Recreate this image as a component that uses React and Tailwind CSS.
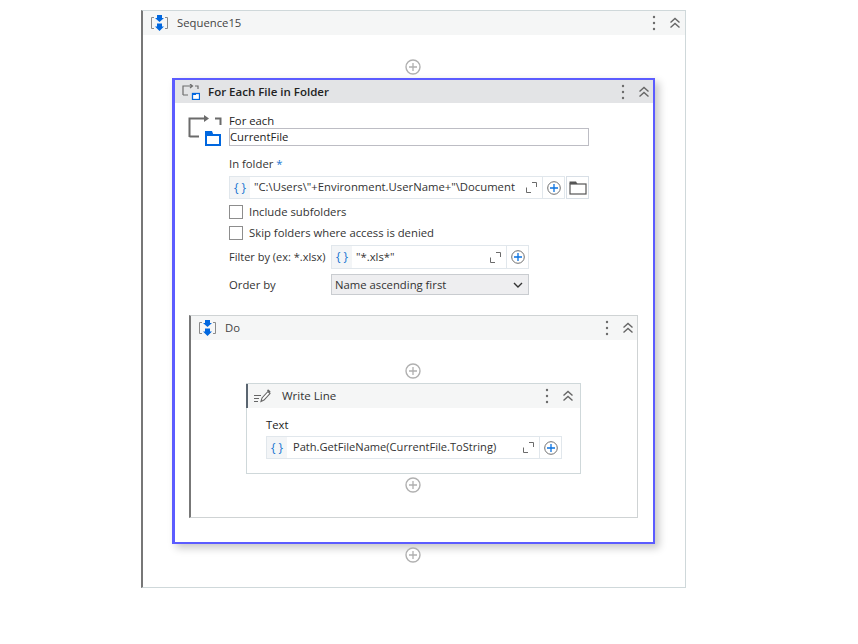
import React from "react";

const SequenceIcon = () => (
  <svg width="17" height="16" viewBox="0 0 17 16" fill="none" className="shrink-0">
    <path d="M3 2.5H0.5V13.5H3M14 2.5H16.5V13.5H14" stroke="#8a8a8a" strokeWidth="1" />
    <path d="M6 0H11V3H13L8.5 7L4 3H6Z" fill="#0067df" />
    <path d="M6 8.5H11V11.5H13L8.5 16L4 11.5H6Z" fill="#0067df" />
  </svg>
);

const ForEachSmall = () => (
  <svg width="18" height="16" viewBox="0 0 18 16" fill="none" className="shrink-0">
    <path d="M1 11V2H10M8 0L10.5 2L8 4M13 2H16V5M1 11H6" stroke="#6d6d6d" strokeWidth="1.2" />
    <rect x="10.5" y="9.5" width="7" height="6" stroke="#0067df" strokeWidth="1.3" fill="#fff" />
    <path d="M10.5 9H14V11H10.5Z" fill="#0067df" />
  </svg>
);

const ForEachLarge = () => (
  <svg width="34" height="31" viewBox="0 0 34 31" fill="none" className="shrink-0">
    <path d="M1.5 22V3.5H17" stroke="#6b6b6b" strokeWidth="2" />
    <path d="M1.5 21.5H11" stroke="#6b6b6b" strokeWidth="2" />
    <path d="M16 0L21 3.5L16 7Z" fill="#6b6b6b" />
    <path d="M27 3.5H32.5V10" stroke="#6b6b6b" strokeWidth="2" />
    <rect x="18" y="20" width="14" height="10" stroke="#0067df" strokeWidth="2" fill="#fff" />
    <path d="M17 16H24L25.5 20H17Z" fill="#0067df" />
  </svg>
);

const WriteLineIcon = () => (
  <svg width="17" height="14" viewBox="0 0 17 14" fill="none" className="shrink-0">
    <path d="M0 6.5H7M0 9.5H5M0 12.5H4" stroke="#666" strokeWidth="1" />
    <path d="M7 12.5L8 9L14 2.5L16 4.5L10 11Z" stroke="#666" strokeWidth="1.1" fill="#fff" />
    <path d="M13 1L14.5 0.5L16.5 2.5L16 4L13.5 2Z" fill="#666" />
  </svg>
);

const Dots = () => (
  <svg width="4" height="16" viewBox="0 0 4 16" className="shrink-0">
    <circle cx="2" cy="2" r="1.2" fill="#6b6b6b" />
    <circle cx="2" cy="8" r="1.2" fill="#6b6b6b" />
    <circle cx="2" cy="14" r="1.2" fill="#6b6b6b" />
  </svg>
);

const Collapse = () => (
  <svg width="12" height="12" viewBox="0 0 12 12" fill="none" className="shrink-0">
    <path d="M1.5 5.5L6 1.5L10.5 5.5M1.5 10.5L6 6.5L10.5 10.5" stroke="#666" strokeWidth="1.4" />
  </svg>
);

const AddCircle = () => (
  <svg width="16" height="16" viewBox="0 0 16 16" fill="none">
    <circle cx="8" cy="8" r="7" stroke="#b0b0b0" strokeWidth="1.4" fill="#fff" />
    <path d="M8 4V12M4 8H12" stroke="#b0b0b0" strokeWidth="1.3" />
  </svg>
);

const AddBlue = () => (
  <svg width="14" height="14" viewBox="0 0 14 14" fill="none">
    <circle cx="7" cy="7" r="6.3" stroke="#6f6f6f" strokeWidth="1" fill="#fff" />
    <path d="M7 3V11M3 7H11" stroke="#0a72e0" strokeWidth="1.3" />
  </svg>
);

const Expand = () => (
  <svg width="11" height="11" viewBox="0 0 11 11" fill="none" className="shrink-0">
    <path d="M0.5 5.5V10.5H5M6 0.5H10.5V5" stroke="#6b6b6b" strokeWidth="1" />
  </svg>
);

const FolderIcon = () => (
  <svg width="18" height="14" viewBox="0 0 18 14" fill="none">
    <rect x="1" y="3" width="16" height="10" stroke="#555" strokeWidth="1.2" fill="#fff" />
    <path d="M0.5 0.5H7L8.5 3H0.5Z" fill="#555" />
  </svg>
);

const SeqHeader = ({ title, pr = "pr-[2px]" }) => (
  <div className={`flex items-center h-6 ${pr} bg-[#f5f6f6]`}>
    <div className="w-[30px] pl-[2px] flex justify-center shrink-0"><SequenceIcon /></div>
    <span className="ml-[4px] pt-[1px] flex-1 text-[11.3px] text-[#444]">{title}</span>
    <Dots />
    <div className="ml-[13px] w-3 mr-[1px]"><Collapse /></div>
  </div>
);

const Expression = ({ value, w, h = "h-[23px]", textMl = "ml-1", size = "text-[11.3px]" }) => (
  <div className={`flex items-center ${w} ${h} border border-[#e1e7ec] bg-white`}>
    <div className="w-5 self-stretch bg-[#f3f5f7] flex items-center justify-center text-[12px] text-[#1976d2] shrink-0">{"{ }"}</div>
    <span className={`${textMl} flex-1 whitespace-nowrap overflow-hidden ${size} text-[#333]`}>{value}</span>
    <div className="mx-[5px]"><Expand /></div>
    <div className="w-[22px] self-stretch border-l border-[#e1e7ec] flex items-center justify-center shrink-0"><AddBlue /></div>
  </div>
);

const Check = ({ label }) => (
  <div className="flex items-center h-[14px]">
    <div className="w-[14px] h-[14px] border border-[#8d8d8d] bg-white" />
    <span className="ml-[6px] pt-[1px] text-[11.3px] text-[#333]">{label}</span>
  </div>
);

const App = () => {
  return (
    <div className="w-[858px] h-[644px] bg-white pt-[10px] pl-[141px] font-['Open_Sans',sans-serif]">
      <div className="w-[545px] h-[578px] border-t border-r border-b border-[#cfd8da] border-l-2 border-l-[#777] flex flex-col">
        <SeqHeader title="Sequence15" pr="pr-[3px]" />
        <div className="flex flex-col items-start flex-1">
          <div className="self-center mt-6 mb-[3px] -ml-[3px] flex"><AddCircle /></div>

          {/* for each file activity */}
          <div className="ml-[29px] w-[483px] h-[466px] border-2 border-l-[3px] border-[#5c5cff] shadow-[4px_4px_8px_rgba(0,0,0,0.22)] bg-white flex flex-col">
            <div className="flex items-center h-[23px] pr-[2px] bg-[#e3e4e6]">
              <div className="w-[26px] flex justify-center shrink-0 pl-[5px]"><ForEachSmall /></div>
              <span className="ml-[7px] flex-1 text-[11.5px] font-semibold text-[#222]">For Each File in Folder</span>
              <Dots />
              <div className="ml-[13px] w-3 mr-[1px]"><Collapse /></div>
            </div>

            <div className="flex pl-[13px] pt-[12px]">
              <ForEachLarge />
              <div className="ml-[7px] w-[360px]">
                <div className="text-[11.3px] leading-[12px] text-[#222]">For each</div>
                <div className="mt-[1px] h-[18px] border border-[#bdbdc4] flex items-center text-[11.3px] text-[#222]">CurrentFile</div>
                <div className="mt-[10px] h-4 text-[11.3px] leading-4 text-[#333]">In folder <span className="text-[#1976d2]">*</span></div>
                <div className="mt-[4px] flex">
                  <Expression value={'"C:\\Users\\"+Environment.UserName+"\\Document'} w="w-[336px]" />
                  <div className="ml-[1px] w-[23px] h-[23px] border border-[#d8dfe6] flex items-center justify-center"><FolderIcon /></div>
                </div>
                <div className="mt-[6px] flex flex-col gap-[7px]">
                  <Check label="Include subfolders" />
                  <Check label="Skip folders where access is denied" />
                </div>
              </div>
            </div>

            <div className="ml-[54px] mt-[5px] flex items-center">
              <span className="w-[102px] text-[11px] text-[#333] whitespace-nowrap">Filter by (ex: *.xlsx)</span>
              <Expression value={'"*.xls*"'} w="w-[198px]" h="h-6" />
            </div>
            <div className="ml-[54px] mt-[5px] flex items-center">
              <span className="w-[102px] pt-[1px] text-[11.3px] text-[#333]">Order by</span>
              <div className="w-[198px] h-[21px] bg-[#eeeef0] border border-[#c9ccd0] flex items-center justify-between pl-[3px] pr-[5px] pt-[1px] text-[11.3px] text-[#333]">
                <span>Name ascending first</span>
                <svg width="10" height="6" viewBox="0 0 10 6" fill="none"><path d="M1 1L5 5L9 1" stroke="#333" strokeWidth="1.4" /></svg>
              </div>
            </div>

            {/* do sequence */}
            <div className="ml-[14px] mt-[20px] w-[449px] h-[203px] border-t border-r border-b border-[#cfd3d4] border-l-2 border-l-[#777] flex flex-col">
              <SeqHeader title="Do" />
              <div className="flex flex-col items-center">
                <div className="mt-[23px] -ml-[2px] flex"><AddCircle /></div>
                <div className="mt-[4px] w-[335px] h-[91px] -ml-[1px] border border-[#cfd8da]">
                  <div className="flex items-center h-6 pr-[5px] bg-[#f5f6f6] border-l-2 border-l-[#5a6570] -ml-[1px]">
                    <div className="w-[27px] flex justify-center shrink-0 pl-[1px]"><WriteLineIcon /></div>
                    <span className="ml-[7px] flex-1 text-[11.5px] font-medium text-[#333]">Write Line</span>
                    <Dots />
                    <div className="ml-[13px] w-3 mr-[1px]"><Collapse /></div>
                  </div>
                  <div className="pl-[19px] pt-[10px]">
                    <div className="text-[11.3px] leading-[14px] text-[#222]">Text</div>
                    <div className="mt-[4px]">
                      <Expression value="Path.GetFileName(CurrentFile.ToString)" w="w-[296px]" textMl="ml-[6px]" size="text-[11.1px]" />
                    </div>
                  </div>
                </div>
                <div className="mt-[3px] -ml-[2px] flex"><AddCircle /></div>
              </div>
            </div>
          </div>

          <div className="self-center mt-[3px] -ml-[3px] flex"><AddCircle /></div>
        </div>
      </div>
    </div>
  );
};

export default App;
